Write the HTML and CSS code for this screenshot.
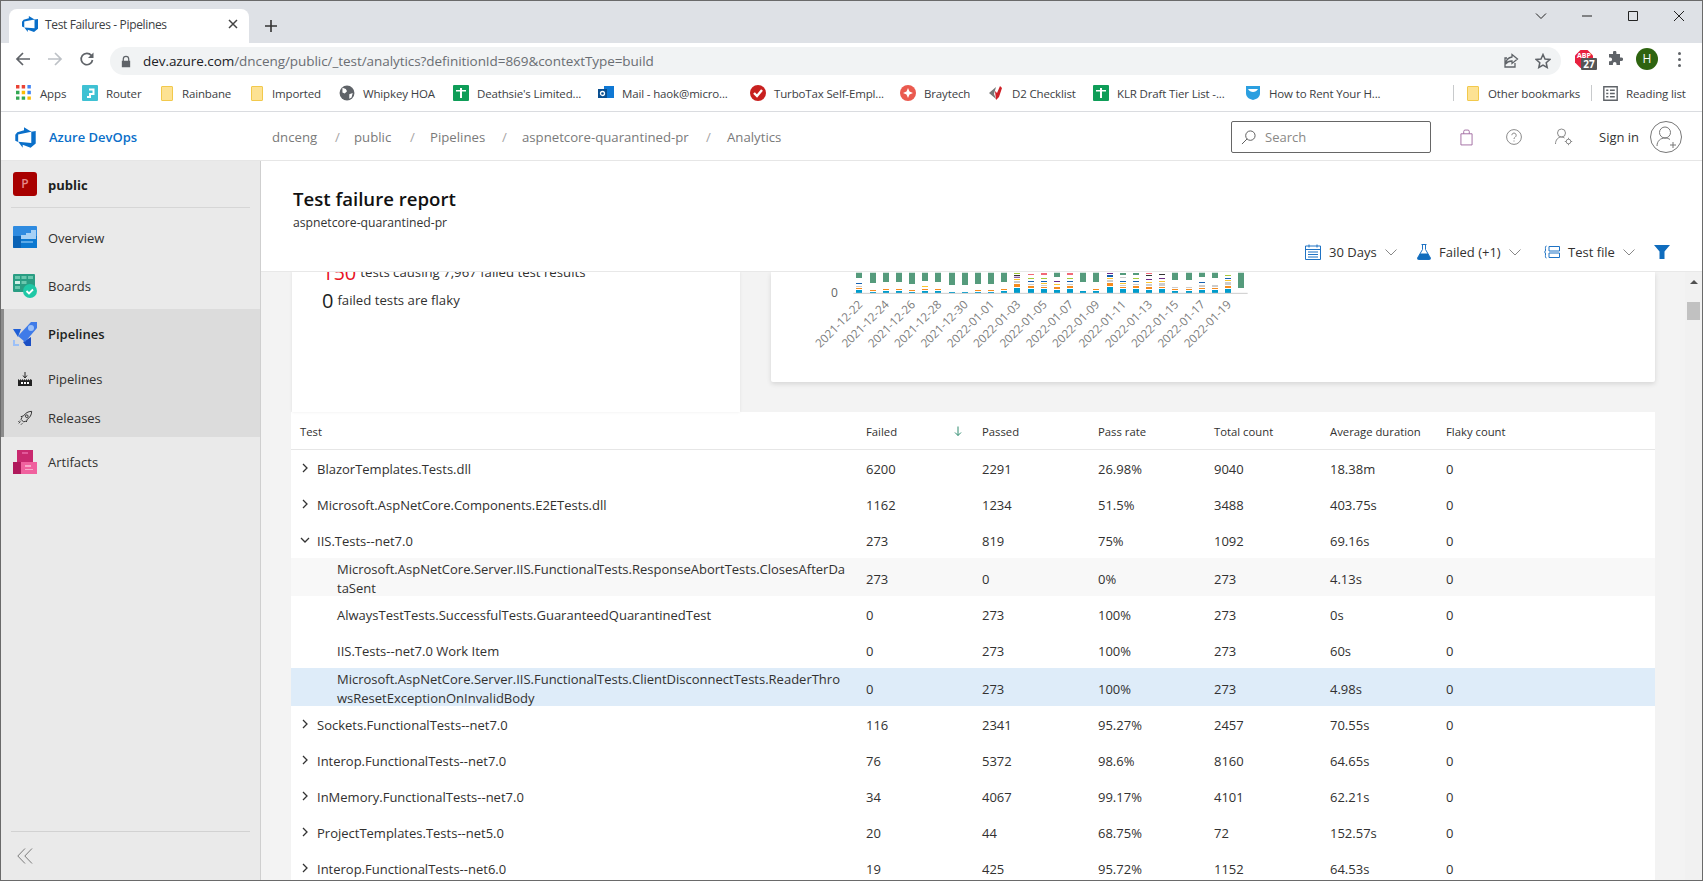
FILE: index.html
```html
<!DOCTYPE html>
<html lang="en">
<head>
<meta charset="utf-8">
<title>Test Failures - Pipelines</title>
<link rel="stylesheet" href="styles.css">
</head>
<body>
<div class="window">
  <div class="tabstrip">
    <div class="tab">
      <svg class="fav" viewBox="0 0 18 18"><path class="azure" d="M17 4v9.74l-4 3.28-6.2-2.26V17L3.29 12.41l10.23.8V4.44Zm-3.41.49L7.85 1V3.29L2.58 4.84 1 6.87v4.61l2.26 1V6.57Z"/></svg>
      <span class="tab-title">Test Failures - Pipelines</span>
      <svg class="tab-x" viewBox="0 0 10 10"><path d="M1 1l8 8M9 1l-8 8"/></svg>
    </div>
    <svg class="newtab" viewBox="0 0 12 12"><path d="M6 0v12M0 6h12"/></svg>
    <div class="winctl">
      <svg viewBox="0 0 12 12"><path d="M1 3.5l5 5 5-5"/></svg>
      <svg viewBox="0 0 12 12"><path d="M1 6h10"/></svg>
      <svg viewBox="0 0 12 12"><path d="M1.5 1.5h9v9h-9z"/></svg>
      <svg viewBox="0 0 12 12"><path d="M1 1l10 10M11 1L1 11"/></svg>
    </div>
  </div>

  <div class="toolbar">
    <svg class="nav" viewBox="0 0 16 16"><path d="M15 8H2M8 2L2 8l6 6"/></svg>
    <svg class="nav nav-off" viewBox="0 0 16 16"><path d="M1 8h13M8 2l6 6-6 6"/></svg>
    <svg class="nav" viewBox="0 0 16 16"><path d="M13.5 9a5.7 5.7 0 1 1-1.2-4.6"/><path class="fill" d="M14.5 1.5V7H9z"/></svg>
    <div class="omnibox">
      <svg class="lock" viewBox="0 0 12 14"><path d="M2 6V4a4 4 0 0 1 8 0v2h1v8H1V6zm1.5 0h5V4a2.5 2.5 0 0 0-5 0z"/></svg>
      <span class="url"><b>dev.azure.com</b>/dnceng/public/_test/analytics?definitionId=869&amp;contextType=build</span>
      <svg class="omni-ic" viewBox="0 0 16 16"><path d="M9 1.500l5.500 4.500L9 10.500V8C6 8 4 9 2.500 11 3 7.500 5 4.500 9 4zM12 10v4H2V5h2"/></svg>
      <svg class="omni-ic star" viewBox="0 0 16 16"><path d="M8 1.500l2 4.500 4.800.5-3.600 3.200 1 4.800L8 12l-4.200 2.500 1-4.800L1.200 6.500 6 6z"/></svg>
    </div>
    <div class="abp"><svg viewBox="0 0 18 18"><path d="M5.500 0h7L18 5.500v7L12.500 18h-7L0 12.500v-7z"/></svg><span class="abp-label">ABP</span><span class="abp-count">27</span></div>
    <svg class="puzzle" viewBox="0 0 16 16"><path d="M6 1.500a1.700 1.700 0 0 1 3.400 0V3H13v3.500h1.300a1.800 1.800 0 0 1 0 3.600H13V14H9.500v-1.300a1.800 1.800 0 0 0-3.600 0V14H2v-3.800h1.300a1.800 1.800 0 0 0 0-3.600H2V3h4z"/></svg>
    <span class="profile">H</span>
    <span class="kebab"><i></i><i></i><i></i></span>
  </div>

  <div class="bookmarks">
    <div class="bm"><svg class="bi" viewBox="0 0 14 14"><path fill="#ea4335" d="M0 0h3v3H0zM5 0h3v3H5z"/><path fill="#4285f4" d="M10 0h3v3h-3zM10 5h3v3h-3z"/><path fill="#34a853" d="M0 5h3v3H0zM0 10h3v3H0zM5 10h3v3H5z"/><path fill="#fbbc05" d="M5 5h3v3H5zM10 10h3v3h-3z"/></svg>Apps</div>
    <div class="bm"><svg class="bi" viewBox="0 0 16 16"><rect width="16" height="16" rx="1" fill="#3fc1d3"/><path d="M7 4.500h4.500V9H8v3H5" fill="none" stroke="#fff" stroke-width="2"/></svg>Router</div>
    <div class="bm"><span class="folder"></span>Rainbane</div>
    <div class="bm"><span class="folder"></span>Imported</div>
    <div class="bm"><svg class="bi" viewBox="0 0 14 14"><circle cx="7" cy="7" r="6.500" fill="#5f6368"/><path d="M3 2.500l3 1 1 2-2 2-2-1zM9 8l3-1-1 4-2 1z" fill="#fff"/></svg>Whipkey HOA</div>
    <div class="bm"><svg class="bi" viewBox="0 0 16 16"><rect width="16" height="16" rx="1" fill="#0f9d58"/><path d="M3 5h10v1.500H3zM7 3h2v10H7z" fill="#fff"/></svg>Deathsie's Limited...</div>
    <div class="bm"><svg class="bi" viewBox="0 0 16 16"><path d="M6 1h10v12H6z" fill="#0f78d4"/><path d="M0 4h9v9H0z" fill="#0a4f90"/><circle cx="4.500" cy="8.500" r="2" fill="none" stroke="#fff" stroke-width="1.300"/></svg>Mail - haok@micro...</div>
    <div class="bm"><svg class="bi" viewBox="0 0 16 16"><circle cx="8" cy="8" r="8" fill="#c8201f"/><path d="M4 8l3 3 5-6" fill="none" stroke="#fff" stroke-width="2.400"/></svg>TurboTax Self-Empl...</div>
    <div class="bm"><svg class="bi" viewBox="0 0 16 16"><circle cx="8" cy="8" r="8" fill="#ea5a4f"/><path d="M8 3l1.500 3.500L13 8l-3.500 1.500L8 13l-1.500-3.500L3 8l3.500-1.500z" fill="#fff"/></svg>Braytech</div>
    <div class="bm"><svg class="bi" viewBox="0 0 16 16"><path d="M1 8l7-6-2 7 2 5z" fill="#777"/><path d="M12 1L9 8 7 6l1 9 3-3 3-9z" fill="#cf2027"/></svg>D2 Checklist</div>
    <div class="bm"><svg class="bi" viewBox="0 0 16 16"><rect width="16" height="16" rx="1" fill="#0f9d58"/><path d="M3 5h10v1.500H3zM7 3h2v10H7z" fill="#fff"/></svg>KLR Draft Tier List -...</div>
    <div class="bm"><svg class="bi" viewBox="0 0 16 16"><path d="M1 1h14v7c0 4-3 6-7 7-4-1-7-3-7-7z" fill="#2b9fe0"/><path d="M3 4h10c-1 2-3 3-5 3S4 6 3 4z" fill="#fff"/></svg>How to Rent Your H...</div>
    <span class="bm-sep"></span>
    <div class="bm"><span class="folder"></span>Other bookmarks</div>
    <span class="bm-sep"></span>
    <div class="bm"><svg class="bi read" viewBox="0 0 14 14"><path d="M.75.75h12.500v12.500H.75zM3 4h2M3 7h2M3 10h2M6.500 4H11M6.500 7H11M6.500 10H11"/></svg>Reading list</div>
  </div>

  <div class="topbar">
    <div class="brand">
      <svg class="brand-logo" viewBox="0 0 18 18"><path class="azure" d="M17 4v9.74l-4 3.28-6.2-2.26V17L3.29 12.41l10.23.8V4.44Zm-3.41.49L7.85 1V3.29L2.58 4.84 1 6.87v4.61l2.26 1V6.57Z"/></svg>
      <span>Azure DevOps</span>
    </div>
    <nav class="crumbs">
      <span>dnceng</span><i>/</i><span>public</span><i>/</i><span>Pipelines</span><i>/</i><span>aspnetcore-quarantined-pr</span><i>/</i><span>Analytics</span>
    </nav>
    <div class="search">
      <svg viewBox="0 0 16 16"><circle cx="10" cy="6" r="5"/><path d="M6.500 9.500L1 15"/></svg>
      <span>Search</span>
    </div>
    <svg class="top-ic bag" viewBox="0 0 14 18"><path d="M1 5h12v12H1zM4 5V2.500a1.500 1.500 0 0 1 1.500-1.500h3A1.500 1.500 0 0 1 10 2.500V5"/></svg>
    <svg class="top-ic help" viewBox="0 0 16 16"><circle cx="8" cy="8" r="7.400"/><path d="M5.800 6.200a2.200 2.200 0 1 1 3.400 1.900c-.8.500-1.200 1-1.200 1.900M8 11.500v1"/></svg>
    <svg class="top-ic usr" viewBox="0 0 18 18"><circle cx="6.500" cy="5" r="4"/><path d="M.5 16c0-4 2.500-7 6-7 1.200 0 2 .3 3 1"/><circle cx="13.500" cy="13.500" r="2.300"/><path d="M13.500 9.800v1.400M13.500 15.800v1.400M9.800 13.500h1.400M15.800 13.500h1.400"/></svg>
    <span class="signin">Sign in</span>
    <svg class="signin-av" viewBox="0 0 32 32"><circle cx="16" cy="16" r="15.500"/><circle cx="15" cy="11.500" r="5.500"/><path d="M7 25c0-5 3.500-8 8-8 2 0 3.500.5 5 1.500M23 21v6M20 24h6"/></svg>
  </div>

  <div class="app">
    <aside class="sidebar">
      <div class="project"><span class="p-badge">P</span><strong>public</strong></div>
      <ul class="sidenav">
        <li class="nav-row">
          <svg class="nav-ic" viewBox="0 0 24 24"><rect y="0" width="24" height="22" rx="1" fill="#2f8be0"/><path d="M0 10h8V22H1a1 1 0 0 1-1-1z" fill="#0a62b5"/><path d="M8 10h16v12H8z" fill="#0b78d0"/><path d="M18 4h5v9H8v-4h5V7h5z" fill="#a6d1f5"/><path d="M8 15h12v2H8z" fill="#5aa9e8"/></svg>
          <span>Overview</span>
        </li>
        <li class="nav-row nav-boards">
          <svg class="nav-ic" viewBox="0 0 24 24"><rect width="22" height="18" rx="1" fill="#2a9d83"/><path d="M2 2h5v3H2zM8.500 2h5v3h-5zM15 2h5v3h-5z" fill="#6ac7ae"/><path d="M2 7h5v3H2z" fill="#d2f0e8"/><path d="M8.500 7h5v3h-5z" fill="#6ac7ae"/><path d="M2 12h5v3H2z" fill="#6ac7ae"/><circle cx="17" cy="17" r="7" fill="#1fc8a6"/><path d="M13.500 17l2.500 2.500 4-4" fill="none" stroke="#fff" stroke-width="1.800"/></svg>
          <span>Boards</span>
        </li>
        <li class="nav-group">
          <div class="nav-row nav-strong">
            <svg class="nav-ic" viewBox="0 0 24 24"><path d="M0 7h8l-3 8z" fill="#1f5fd6"/><path d="M18 24V15l-8 5 3 4z" fill="#1b4fc4"/><path d="M24 0v6L12 20l-7-6L18 0z" fill="#3f7be8"/><circle cx="18" cy="6" r="3" fill="#9cc0f7"/><path d="M0 24v-6h2v4h4v2z" fill="#9cc0f7"/></svg>
            <span>Pipelines</span>
          </div>
          <div class="nav-row nav-sub">
            <svg class="sub-ic" viewBox="0 0 16 16"><path d="M1 15V8l2 1.500V8l2 1.500V8l2 1.500V8l2 1.500V8l2 1.500V8l2 1.500V8l2 1v6z" fill="#222"/><path d="M8 1v5M6 4.500L8 7l2-2.500" fill="none" stroke="#222"/><path d="M4 11h2v2H4zM7 11h2v2H7zM10 11h2v2h-2z" fill="#fff"/></svg>
            <span>Pipelines</span>
          </div>
          <div class="nav-row nav-sub">
            <svg class="sub-ic rocket" viewBox="0 0 18 18"><path d="M16.500 1.500c-4 0-7 2-9 5l-3 1 1 1-1 2 3 3 2-1 1 1 1-3c3-2 5-5 5-9z"/><circle cx="11" cy="7" r="1.500"/><path d="M4 13l-2 2M3 12l-1.500 1.500M6 15l-1.500 1.500"/></svg>
            <span>Releases</span>
          </div>
        </li>
        <li class="nav-row">
          <svg class="nav-ic" viewBox="0 0 24 24"><path d="M4 0h16v12H4z" fill="#c9296f"/><path d="M0 12h12v12H0z" fill="#b01a5c"/><path d="M8 12h16v12H8z" fill="#f0619e"/><path d="M12 15h6v2h-6zM12 19h8v1h-8z" fill="#f8a8ca"/><path d="M9 2h6v2H9z" fill="#e2589a"/></svg>
          <span>Artifacts</span>
        </li>
      </ul>
      <div class="side-foot">
        <svg viewBox="0 0 16 16"><path d="M8 .5L.8 8 8 15.500M15 .5L7.800 8 15 15.500"/></svg>
      </div>
    </aside>

    <main class="main">
      <header class="pagehead">
        <h1>Test failure report</h1>
        <p>aspnetcore-quarantined-pr</p>
        <div class="filters">
          <div class="filter f-date">
            <svg class="f-ic" viewBox="0 0 16 16"><path d="M.5 2h15v13.500H.5zM.5 5.500h15M4 .5v3M12 .5v3M3 8h10M3 10.500h10M3 13h10" /></svg>
            <span>30 Days</span>
            <svg class="chev" viewBox="0 0 12 7"><path d="M.5.5L6 6 11.500.5"/></svg>
          </div>
          <div class="filter f-out">
            <svg class="f-ic flask" viewBox="0 0 14 16"><path d="M4.500.5h5M5.500.5v5L.5 14a1 1 0 0 0 1 1.500h11a1 1 0 0 0 1-1.500l-5-8.500v-5"/><path class="fill" d="M3.200 9.500h7.600l2.700 4.700a.9.900 0 0 1-.9 1.300H1.400a.9.900 0 0 1-.9-1.300z"/></svg>
            <span>Failed (+1)</span>
            <svg class="chev" viewBox="0 0 12 7"><path d="M.5.5L6 6 11.500.5"/></svg>
          </div>
          <div class="filter f-grp">
            <svg class="f-ic" viewBox="0 0 16 14"><path d="M2.500 1C1 1 1.500 3 1.500 5S.5 7 .5 7s1 0 1 2-.5 4 1 4M5 1.500h10.500v4.500H5zM5 8h10.500v4.500H5z"/></svg>
            <span>Test file</span>
            <svg class="chev" viewBox="0 0 12 7"><path d="M.5.5L6 6 11.500.5"/></svg>
          </div>
          <svg class="funnel" viewBox="0 0 16 14"><path d="M0 0h16l-5.500 6.500V14h-5V6.500z"/></svg>
        </div>
      </header>

      <div class="scroller">
        <div class="content">
          <div class="cards">
            <section class="card-summary">
              <div class="stat"><span class="num num-red">150</span><span>tests causing 7,967 failed test results</span></div>
              <div class="stat"><span class="num">0</span><span>failed tests are flaky</span></div>
            </section>
            <section class="card-chart">
              <svg class="chart" viewBox="0 0 1500 510">
                <path class="b-green" d="M228 98h18v16h-18zM270 98h18v31h-18zM309 98h18v28h-18zM348 98h18v28h-18zM387 98h18v34h-18zM426 98h18v25h-18zM465 98h18v28h-18zM507 98h18v37h-18zM546 98h18v37h-18zM585 98h18v34h-18zM624 98h18v34h-18zM663 98h18v28h-18zM822 98h18v13h-18zM900 98h18v28h-18zM939 98h18v28h-18zM1020 99h18v6h-18zM1059 99h18v6h-18zM1176 98h18v22h-18zM1218 98h18v22h-18zM1257 98h18v13h-18zM1296 98h18v16h-18zM1374 98h18v46h-18z"/>
                <path class="b-cyan" d="M228 150h18v9h-18zM270 156h18v3h-18zM309 153h18v6h-18zM348 153h18v6h-18zM387 156h18v3h-18zM426 153h18v6h-18zM465 153h18v6h-18zM507 156h18v3h-18zM546 156h18v3h-18zM585 156h18v3h-18zM624 156h18v3h-18zM663 153h18v6h-18zM702 144h18v15h-18zM744 147h18v12h-18zM783 147h18v12h-18zM822 150h18v9h-18zM861 147h18v12h-18zM900 153h18v6h-18zM939 153h18v6h-18zM981 141h18v18h-18zM1020 147h18v12h-18zM1059 147h18v12h-18zM1098 150h18v9h-18zM1137 147h18v12h-18zM1176 153h18v6h-18zM1218 153h18v6h-18zM1257 150h18v9h-18zM1296 150h18v9h-18zM1335 147h18v12h-18z"/>
                <path class="b-orange" d="M228 144h18v3h-18zM270 150h18v3h-18zM309 147h18v3h-18zM348 147h18v3h-18zM387 150h18v3h-18zM426 147h18v3h-18zM465 147h18v3h-18zM585 150h18v3h-18zM624 150h18v3h-18zM663 147h18v3h-18zM702 132h18v9h-18zM744 138h18v6h-18zM783 141h18v3h-18zM822 141h18v6h-18zM861 138h18v6h-18zM939 147h18v3h-18zM981 129h18v9h-18zM1020 141h18v3h-18zM1059 138h18v6h-18zM1098 141h18v6h-18zM1137 141h18v3h-18zM1176 147h18v3h-18zM1218 147h18v3h-18zM1257 144h18v3h-18zM1296 144h18v3h-18zM1335 138h18v6h-18z"/>
                <path class="b-grey" d="M228 138h18v3h-18zM702 123h18v6h-18zM744 132h18v3h-18zM783 135h18v3h-18zM861 132h18v3h-18zM981 120h18v6h-18zM1020 135h18v3h-18zM1020 111h18v3h-18zM1059 132h18v3h-18zM1098 132h18v6h-18zM1137 129h18v9h-18zM1176 141h18v3h-18zM1218 141h18v3h-18zM1257 135h18v6h-18zM1296 135h18v6h-18zM1335 126h18v9h-18z"/>
                <path class="b-yellow" d="M426 138h18v3h-18zM702 117h18v3h-18zM783 129h18v3h-18zM822 132h18v3h-18zM981 114h18v3h-18zM1020 129h18v3h-18zM1098 126h18v3h-18zM1137 123h18v3h-18zM1335 120h18v3h-18z"/>
                <path class="b-navy" d="M228 129h18v3h-18zM744 123h18v3h-18zM783 123h18v3h-18zM861 123h18v3h-18zM981 105h18v6h-18zM1020 123h18v3h-18zM1059 123h18v3h-18zM1257 126h18v3h-18zM1335 114h18v3h-18z"/>
                <path class="b-purple" d="M702 110h18v3h-18zM822 123h18v3h-18zM981 99h18v3h-18zM1098 117h18v3h-18zM1137 114h18v3h-18z"/>
                <path class="b-pink" d="M744 102h18v3h-18zM783 99h18v6h-18zM861 99h18v6h-18zM1098 99h18v3h-18z"/>
                <path class="b-lime" d="M702 99h18v3h-18zM744 114h18v3h-18zM783 114h18v3h-18zM861 114h18v3h-18zM1059 114h18v3h-18zM1335 105h18v3h-18z"/>
                <path class="b-dark" d="M702 105h18v3h-18zM1098 105h18v3h-18zM1137 102h18v3h-18z"/>
                <path class="axis" d="M220 160h1183"/>
                <text class="zero" x="153" y="170">0</text>
                <g class="xlab">
                  <text transform="translate(250 196) rotate(-45)">2021-12-22</text>
                  <text transform="translate(329 196) rotate(-45)">2021-12-24</text>
                  <text transform="translate(408 196) rotate(-45)">2021-12-26</text>
                  <text transform="translate(487 196) rotate(-45)">2021-12-28</text>
                  <text transform="translate(566 196) rotate(-45)">2021-12-30</text>
                  <text transform="translate(645 196) rotate(-45)">2022-01-01</text>
                  <text transform="translate(724 196) rotate(-45)">2022-01-03</text>
                  <text transform="translate(803 196) rotate(-45)">2022-01-05</text>
                  <text transform="translate(882 196) rotate(-45)">2022-01-07</text>
                  <text transform="translate(961 196) rotate(-45)">2022-01-09</text>
                  <text transform="translate(1040 196) rotate(-45)">2022-01-11</text>
                  <text transform="translate(1119 196) rotate(-45)">2022-01-13</text>
                  <text transform="translate(1198 196) rotate(-45)">2022-01-15</text>
                  <text transform="translate(1277 196) rotate(-45)">2022-01-17</text>
                  <text transform="translate(1356 196) rotate(-45)">2022-01-19</text>
                </g>
              </svg>
            </section>
          </div>

          <section class="table">
            <div class="row head">
              <div class="c-test">Test</div><div class="c-sort">Failed<svg class="sort" viewBox="0 0 8 10"><path d="M4 0v9M1 6l3 3 3-3"/></svg></div><div>Passed</div><div>Pass rate</div><div>Total count</div><div>Average duration</div><div>Flaky count</div>
            </div>
            <div class="row"><div class="c-test"><svg class="tw" viewBox="0 0 6 10"><path d="M1 1l4 4-4 4"/></svg>BlazorTemplates.Tests.dll</div><div>6200</div><div>2291</div><div>26.98%</div><div>9040</div><div>18.38m</div><div>0</div></div>
            <div class="row"><div class="c-test"><svg class="tw" viewBox="0 0 6 10"><path d="M1 1l4 4-4 4"/></svg>Microsoft.AspNetCore.Components.E2ETests.dll</div><div>1162</div><div>1234</div><div>51.5%</div><div>3488</div><div>403.75s</div><div>0</div></div>
            <div class="row"><div class="c-test"><svg class="tw tw-open" viewBox="0 0 6 10"><path d="M1 1l4 4-4 4"/></svg>IIS.Tests--net7.0</div><div>273</div><div>819</div><div>75%</div><div>1092</div><div>69.16s</div><div>0</div></div>
            <div class="row sub tall hover"><div class="c-test"><span class="wrap">Microsoft.AspNetCore.Server.IIS.FunctionalTests.ResponseAbortTests.ClosesAfterDa<br>taSent</span></div><div>273</div><div>0</div><div>0%</div><div>273</div><div>4.13s</div><div>0</div></div>
            <div class="row sub"><div class="c-test">AlwaysTestTests.SuccessfulTests.GuaranteedQuarantinedTest</div><div>0</div><div>273</div><div>100%</div><div>273</div><div>0s</div><div>0</div></div>
            <div class="row sub"><div class="c-test">IIS.Tests--net7.0 Work Item</div><div>0</div><div>273</div><div>100%</div><div>273</div><div>60s</div><div>0</div></div>
            <div class="row sub tall selected"><div class="c-test"><span class="wrap">Microsoft.AspNetCore.Server.IIS.FunctionalTests.ClientDisconnectTests.ReaderThro<br>wsResetExceptionOnInvalidBody</span></div><div>0</div><div>273</div><div>100%</div><div>273</div><div>4.98s</div><div>0</div></div>
            <div class="row"><div class="c-test"><svg class="tw" viewBox="0 0 6 10"><path d="M1 1l4 4-4 4"/></svg>Sockets.FunctionalTests--net7.0</div><div>116</div><div>2341</div><div>95.27%</div><div>2457</div><div>70.55s</div><div>0</div></div>
            <div class="row"><div class="c-test"><svg class="tw" viewBox="0 0 6 10"><path d="M1 1l4 4-4 4"/></svg>Interop.FunctionalTests--net7.0</div><div>76</div><div>5372</div><div>98.6%</div><div>8160</div><div>64.65s</div><div>0</div></div>
            <div class="row"><div class="c-test"><svg class="tw" viewBox="0 0 6 10"><path d="M1 1l4 4-4 4"/></svg>InMemory.FunctionalTests--net7.0</div><div>34</div><div>4067</div><div>99.17%</div><div>4101</div><div>62.21s</div><div>0</div></div>
            <div class="row"><div class="c-test"><svg class="tw" viewBox="0 0 6 10"><path d="M1 1l4 4-4 4"/></svg>ProjectTemplates.Tests--net5.0</div><div>20</div><div>44</div><div>68.75%</div><div>72</div><div>152.57s</div><div>0</div></div>
            <div class="row"><div class="c-test"><svg class="tw" viewBox="0 0 6 10"><path d="M1 1l4 4-4 4"/></svg>Interop.FunctionalTests--net6.0</div><div>19</div><div>425</div><div>95.72%</div><div>1152</div><div>64.53s</div><div>0</div></div>
          </section>
        </div>
        <div class="scrollbar">
          <span class="sb-up"></span>
          <span class="sb-thumb"></span>
        </div>
      </div>
    </main>
  </div>
</div>
</body>
</html>
```

FILE: styles.css
```css
* { box-sizing: border-box; }
html, body { margin: 0; height: 100%; overflow: hidden; }
body { font-family: "Open Sans", "Noto Sans", "Liberation Sans", sans-serif; color: #201f1e; background: #fff; }
svg { display: block; flex: none; }
.azure { fill: #0a6fc9; }

.window { width: 1703px; height: 881px; display: flex; flex-direction: column; border: 1px solid #6a6a6a; overflow: hidden; }

/* tab strip */
.tabstrip { height: 42px; flex: none; background: #dee1e6; display: flex; align-items: flex-end; padding-left: 8px; }
.tab { width: 240px; height: 34px; background: #fff; border-radius: 8px 8px 0 0; display: flex; align-items: center; padding-left: 12px; }
.fav { width: 18px; height: 18px; margin-top: -4px; }
.tab-title { font-size: 12px; letter-spacing: -.35px; margin-left: 6px; flex: 1; color: #3c4043; margin-top: -4px; }
.tab-x { width: 10px; height: 10px; margin: -4px 11px 0 0; fill: none; stroke: #444; stroke-width: 1.500; }
.newtab { width: 12px; height: 12px; margin: 0 0 11px 16px; fill: none; stroke: #333; stroke-width: 1.600; }
.winctl { margin-left: auto; align-self: flex-start; display: flex; gap: 34px; padding: 9px 17px 0 0; }
.winctl svg { width: 12px; height: 12px; fill: none; stroke: #222; stroke-width: 1; }

/* toolbar */
.toolbar { height: 32px; flex: none; background: #fff; display: flex; align-items: center; padding-left: 14px; }
.nav { width: 16px; height: 16px; margin-right: 16px; fill: none; stroke: #5f6368; stroke-width: 1.700; }
.nav-off { stroke: #bdc1c6; }
.nav .fill { fill: #5f6368; stroke: none; }
.omnibox { margin-left: -1px; width: 1451px; height: 28px; align-self: flex-end; border-radius: 14px; background: #f1f3f4; display: flex; align-items: center; padding-left: 11px; }
.lock { width: 10px; height: 13px; fill: #5f6368; }
.url { margin-left: 12px; flex: 1; font-size: 13.500px; letter-spacing: -.06px; color: #6a6e73; white-space: nowrap; }
.url b { font-weight: 400; color: #202124; }
.omni-ic { width: 16px; height: 16px; margin-right: 16px; fill: none; stroke: #5f6368; stroke-width: 1.300; }
.star { margin-right: 10px; stroke-width: 1.500; }
.abp { position: relative; width: 18px; height: 18px; margin-left: 14px; }
.abp svg { width: 18px; height: 18px; fill: #e8213f; }
.abp-label { position: absolute; left: 0; top: 2px; width: 18px; color: #fff; font-size: 7px; line-height: 8px; font-weight: 700; text-align: center; }
.abp-count { position: absolute; left: 6px; top: 8px; width: 16px; height: 12px; background: #555; color: #fff; font-size: 10px; line-height: 12px; font-weight: 700; text-align: center; border-radius: 1px; }
.puzzle { width: 16px; height: 16px; margin-left: 14px; fill: #5f6368; }
.profile { width: 22px; height: 22px; margin-left: 13px; border-radius: 50%; background: #2e6410; color: #fff; font-size: 12px; line-height: 22px; text-align: center; }
.kebab { margin-left: 20px; display: flex; flex-direction: column; gap: 3px; }
.kebab i { width: 3px; height: 3px; border-radius: 50%; background: #5f6368; }

/* bookmarks */
.bookmarks { height: 37px; flex: none; background: #fff; border-bottom: 1px solid #dadce0; display: grid; grid-template-columns: 66px 78px 90px 89px 114px 145px 152px 150px 88px 105px 152px 208px 13px 125px 12px 1fr; align-items: center; padding-left: 15px; font-size: 11.500px; letter-spacing: -.15px; color: #3c4043; }
.bm { display: flex; align-items: center; gap: 8px; white-space: nowrap; }
.bi { width: 16px; height: 16px; }
.folder { width: 12px; height: 15px; margin-left: 1px; background: #fde293; border: 1px solid #f2c94c; border-radius: 1px; flex: none; margin-right: 1px; }
.bm-sep { width: 1px; height: 16px; background: #c8cacc; }
.read { width: 15px; height: 15px; fill: none; stroke: #5f6368; stroke-width: 1.300; }

/* azure top bar */
.topbar { height: 49px; flex: none; background: #fff; border-bottom: 1px solid #e6e6e6; display: flex; align-items: center; padding: 2px 0 0 13px; }
.brand { width: 258px; display: flex; align-items: center; gap: 12px; font-size: 13px; font-weight: 600; color: #0a6fc9; }
.brand-logo { width: 23px; height: 23px; }
.crumbs { width: 959px; display: grid; grid-template-columns: 63px 19px 56px 20px 72px 20px 184px 21px 1fr; font-size: 13.200px; color: #7a7a7a; }
.crumbs i { font-style: normal; color: #a6a6a6; }
.search { width: 200px; height: 32px; border: 1px solid #666; border-radius: 2px; display: flex; align-items: center; padding-left: 9px; gap: 9px; font-size: 13px; color: #8a8886; }
.search svg { width: 15px; height: 15px; fill: none; stroke: #555; stroke-width: 1; }
.top-ic { fill: none; stroke: #8a8a8a; stroke-width: 1; }
.bag { width: 13px; height: 17px; margin-left: 29px; stroke: #a06aa0; }
.help { width: 16px; height: 16px; margin-left: 33px; stroke: #8a8a8a; }
.usr { width: 18px; height: 18px; margin-left: 33px; }
.signin { margin-left: 26px; font-size: 13px; color: #333; }
.signin-av { width: 32px; height: 32px; margin-left: 11px; fill: none; stroke: #777; stroke-width: 1; }

/* app frame */
.app { flex: 1; min-height: 0; display: flex; }
.sidebar { width: 260px; flex: none; background: #eaeaea; border-right: 1px solid #cfcfcf; display: flex; flex-direction: column; }
.project { height: 47px; flex: none; margin: 0 10px; padding: 11px 0 0 2px; border-bottom: 1px solid #d6d6d6; display: flex; gap: 11px; align-items: flex-start; font-size: 13px; }
.project strong { line-height: 24px; margin-top: 1px; font-weight: 700; color: #201f1e; }
.p-badge { width: 24px; height: 24px; border-radius: 3px; background: #a80000; color: #e68a8a; font-size: 12px; font-weight: 600; line-height: 24px; text-align: center; }
.sidenav { list-style: none; margin: 6px 0 0; padding: 0; flex: 1; font-size: 13px; color: #323130; }
.nav-row { height: 48px; display: flex; align-items: center; gap: 11px; padding-left: 12px; }
.nav-boards { height: 47px; }
.nav-group { background: #dcdcdc; box-shadow: inset 3px 0 #8c8c8c; height: 128px; margin-bottom: 1px; }
.nav-strong { height: 50px; font-weight: 600; color: #201f1e; }
.nav-sub { height: 39px; }
.nav-ic { width: 24px; height: 24px; }
.sub-ic { width: 16px; height: 16px; margin: 0 4px; }
.rocket { fill: none; stroke: #222; stroke-width: 1; }
.side-foot { height: 49px; flex: none; margin: 0 10px; border-top: 1px solid #d2d2d2; padding: 16px 0 0 6px; }
.side-foot svg { width: 16px; height: 16px; fill: none; stroke: #7a7a7a; stroke-width: 1; }

/* main */
.main { flex: 1; min-width: 0; display: flex; flex-direction: column; background: #f3f3f3; }
.pagehead { height: 111px; flex: none; background: #fff; border-bottom: 1px solid #e8e8e8; padding: 25px 0 0 32px; }
.pagehead h1 { margin: 0; font-size: 18.600px; line-height: 26px; font-weight: 600; color: #111; }
.pagehead p { margin: 3px 0 0; font-size: 12.200px; line-height: 16px; color: #333; }
.filters { display: flex; align-items: center; justify-content: flex-end; margin-top: 12px; padding-right: 32px; font-size: 13px; color: #323130; }
.filter { display: flex; align-items: center; gap: 8px; }
.f-date { width: 112px; }
.f-out { width: 127px; }
.f-grp { width: 110px; }
.f-ic { width: 16px; height: 16px; fill: none; stroke: #1f73c4; stroke-width: 1; }
.flask { width: 14px; }
.flask .fill { fill: #0f6cbd; stroke: none; }
.chev { width: 12px; height: 7px; margin-left: 0; fill: none; stroke: #888; stroke-width: 1; }
.funnel { width: 16px; height: 14px; fill: #0f6cbd; }

.scroller { flex: 1; min-height: 0; display: flex; overflow: hidden; }
.content { flex: 1; min-width: 0; padding: 0 30px 0 30px; overflow: hidden; }
.cards { height: 140px; display: flex; gap: 31px; align-items: flex-start; padding-left: 1px; }
.card-summary { width: 448px; height: 140px; background: #fff; padding: 0 0 0 30px; overflow: hidden; box-shadow: 0 0 3px rgba(0,0,0,.08); }
.stat { height: 28px; display: flex; align-items: center; gap: 4px; font-size: 13.200px; color: #323130; }
.stat:first-child { margin-top: -14px; }
.num { font-size: 20px; color: #201f1e; }
.num-red { color: #e81123; }
.card-chart { flex: 1; height: 110px; background: #fff; overflow: hidden; box-shadow: 0 2px 5px rgba(0,0,0,.12); border-radius: 0 0 2px 2px; }
.chart { width: 500px; height: 170px; margin: -32px 0 0 9px; }
.axis { fill: none; stroke: #ccc; stroke-width: 3; }
.zero { font-size: 36px; fill: #666; }
.xlab text { font-size: 35px; fill: #7a7a7a; text-anchor: end; }
.b-green { fill: #559b7c; }
.b-cyan { fill: #009ccc; }
.b-orange { fill: #f58b1f; }
.b-grey { fill: #cccccc; }
.b-yellow { fill: #fcc52f; }
.b-navy { fill: #1560b0; }
.b-purple { fill: #6b2d87; }
.b-pink { fill: #f16a77; }
.b-lime { fill: #a4c93b; }
.b-dark { fill: #333; }

/* table */
.table { background: #fff; font-size: 13px; color: #323130; }
.row { display: grid; grid-template-columns: 575px 116px 116px 116px 116px 116px 1fr; height: 36px; padding-top: 2px; align-items: center; }
.head { height: 38px; font-size: 11.300px; border-bottom: 1px solid #e6e6e6; }
.c-test { padding-left: 26px; position: relative; }
.head .c-test { padding-left: 9px; }
.c-sort { display: flex; justify-content: space-between; padding-right: 20px; align-items: center; }
.sort { width: 8px; height: 11px; fill: none; stroke: #2e8b6f; stroke-width: 1; }
.tw { position: absolute; left: 11px; top: 3px; width: 6px; height: 10px; fill: none; stroke: #333; stroke-width: 1.300; }
.tw-open { transform: rotate(90deg); }
.sub .c-test { padding-left: 46px; }
.tall { height: 38px; }
.wrap { display: block; white-space: nowrap; line-height: 19px; }
.hover { background: #f8f8f8; }
.selected { background: #deecf9; }

.scrollbar { width: 17px; flex: none; background: #f1f1f1; display: flex; flex-direction: column; align-items: center; padding-top: 8px; }
.sb-up { width: 0; height: 0; border: 4px solid transparent; border-top: 0; border-bottom: 4px solid #505050; }
.sb-thumb { width: 13px; height: 18px; margin-top: 18px; background: #c1c1c1; }
```
